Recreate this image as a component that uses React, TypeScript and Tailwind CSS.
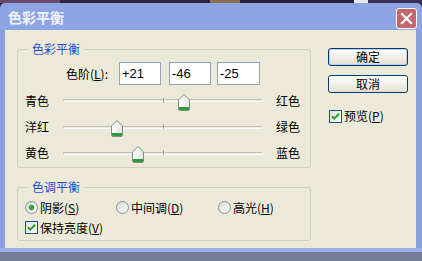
import React from "react";

const FONT = "font-['Noto_Sans_CJK_SC','Noto_Sans',sans-serif]";

function Thumb() {
  return (
    <svg width="12" height="17" viewBox="0 0 12 17">
      <defs>
        <linearGradient id="tg" x1="0" y1="0" x2="1" y2="0">
          <stop offset="0" stopColor="#ffffff" />
          <stop offset="1" stopColor="#e1e7e1" />
        </linearGradient>
      </defs>
      <path
        d="M0.5 5.8 L6 0.5 L11.5 5.8 L11.5 15 Q11.5 16.5 10 16.5 L2 16.5 Q0.5 16.5 0.5 15 Z"
        fill="url(#tg)"
        stroke="#7d8f86"
      />
      <path d="M1 13 H11 V15 Q11 16 10 16 H2 Q1 16 1 15 Z" fill="#2f9a3a" />
    </svg>
  );
}

function Radio({ checked }: { checked?: boolean }) {
  return (
    <svg width="13" height="13" viewBox="0 0 13 13">
      <defs>
        <linearGradient id="rg" x1="0" y1="0" x2="1" y2="1">
          <stop offset="0" stopColor="#d8d8d0" />
          <stop offset="1" stopColor="#ffffff" />
        </linearGradient>
      </defs>
      <circle cx="6.5" cy="6.5" r="6" fill="url(#rg)" stroke="#7b93ae" />
      {checked && <circle cx="6.5" cy="6.5" r="2.7" fill="#3aa53a" />}
    </svg>
  );
}

function Check() {
  return (
    <svg width="13" height="13" viewBox="0 0 13 13">
      <defs>
        <linearGradient id="cg" x1="0" y1="0" x2="1" y2="1">
          <stop offset="0" stopColor="#dcdcd6" />
          <stop offset="1" stopColor="#ffffff" />
        </linearGradient>
      </defs>
      <rect x="0.5" y="0.5" width="12" height="12" fill="url(#cg)" stroke="#1c5180" />
      <path d="M3 6.2 L5.3 8.6 L10 3.8" fill="none" stroke="#21a121" strokeWidth="2" />
    </svg>
  );
}

function SliderRow({
  left,
  right,
  value,
  h,
}: {
  left: string;
  right: string;
  value: number;
  h: string;
}) {
  return (
    <div className={`flex items-center pl-[7px] ${h}`}>
      <span className="w-[38px] text-[12px] leading-[16px]">{left}</span>
      <div className="relative w-[200px] h-full flex items-center">
        <div className="w-full h-[3px] rounded-[2px] border border-[#c2bfb2] border-b-white border-r-white bg-[#eceadf]" />
        <div className="absolute left-[100px] top-1/2 -mt-[3px] h-[5px] w-px bg-[#a3a095]" />
        <div className="absolute top-1/2 -mt-[7px] flex" style={{ left: value + 100 - 6 }}>
          <Thumb />
        </div>
      </div>
      <span className="ml-[13px] text-[12px] leading-[16px]">{right}</span>
    </div>
  );
}

function Group({
  title,
  className,
  children,
}: {
  title: string;
  className: string;
  children: React.ReactNode;
}) {
  return (
    <div className={`relative border border-[#d0d0bf] rounded-[3px] ${className}`}>
      <span className="absolute left-[10px] -top-[9px] px-[4px] bg-[#ece9d8] text-[12px] leading-[16px] text-[#1e4fd0]">
        {title}
      </span>
      {children}
    </div>
  );
}

function NumBox({ v, w }: { v: string; w: string }) {
  return (
    <div
      className={`${w} h-[23px] bg-white border border-[#8ea4c0] flex items-center pl-[2px] font-['Liberation_Sans',sans-serif] text-[13px] leading-[16px]`}
    >
      {v}
    </div>
  );
}

export default function App() {
  return (
    <div className={`w-[422px] h-[261px] flex flex-col overflow-hidden bg-[#2c2340] text-black ${FONT}`}>
      {/* background strip above the window */}
      <div className="h-[3px] flex">
        <div className="w-[60px] bg-[#6a4a6e]" />
        <div className="w-[150px] bg-[#2e2444]" />
        <div className="w-[30px] bg-[#8a6e52]" />
        <div className="w-[114px] bg-[#2a2040]" />
        <div className="w-[14px] bg-[#e8e8ee]" />
        <div className="flex-1 bg-[#3a2e58]" />
      </div>

      {/* title bar */}
      <div className="h-[27px] flex items-center bg-[#8da5e3] rounded-t-[5px]">
        <span className="ml-[8px] text-[14px] font-bold leading-[18px] text-[#f2f5fd]">色彩平衡</span>
        <div className="ml-auto mr-[5px] mt-[5px] self-start w-[21px] h-[21px] rounded-[3px] border border-white bg-[#c4676d] flex items-center justify-center">
          <svg width="13" height="13" viewBox="0 0 13 13">
            <path d="M2 2 L11 11 M11 2 L2 11" stroke="white" strokeWidth="2.2" strokeLinecap="square" />
          </svg>
        </div>
      </div>

      {/* body with side borders */}
      <div className="h-[218px] flex">
        <div className="w-[5px] bg-[#8aa0dd]" />
        <div className="flex-1 bg-[#ece9d8] flex pl-[12px]">
          {/* left column */}
          <div className="w-[294px] pt-[19px] flex flex-col">
            <Group title="色彩平衡" className="h-[119px]">
              <div className="pt-[12px] flex flex-col">
                <div className="h-[23px] flex items-center pl-[48px]">
                  <span className="w-[53px] text-[12px] leading-[16px]">
                    色阶(<span className="underline">L</span>):
                  </span>
                  <NumBox v="+21" w="w-[42px]" />
                  <div className="ml-[8px]">
                    <NumBox v="-46" w="w-[42px]" />
                  </div>
                  <div className="ml-[6px]">
                    <NumBox v="-25" w="w-[43px]" />
                  </div>
                </div>
                <div className="mt-[2px] flex flex-col">
                  <SliderRow left="青色" right="红色" value={21} h="h-[27px]" />
                  <SliderRow left="洋红" right="绿色" value={-46} h="h-[26px]" />
                  <SliderRow left="黄色" right="蓝色" value={-25} h="h-[26px]" />
                </div>
              </div>
            </Group>

            <Group title="色调平衡" className="mt-[19px] h-[54px]">
              <div className="pt-[12px] pl-[7px] flex flex-col">
                <div className="h-[15px] flex items-center text-[12px] leading-[16px]">
                  <div className="w-[91px] flex items-center">
                    <Radio checked />
                    <span className="ml-[2px]">
                      阴影(<span className="underline">S</span>)
                    </span>
                  </div>
                  <div className="w-[102px] flex items-center">
                    <Radio />
                    <span className="ml-[2px]">
                      中间调(<span className="underline">D</span>)
                    </span>
                  </div>
                  <div className="flex items-center">
                    <Radio />
                    <span className="ml-[2px]">
                      高光(<span className="underline">H</span>)
                    </span>
                  </div>
                </div>
                <div className="mt-[5px] h-[15px] flex items-center text-[12px] leading-[16px]">
                  <Check />
                  <span className="ml-[2px]">
                    保持亮度(<span className="underline">V</span>)
                  </span>
                </div>
              </div>
            </Group>
          </div>

          {/* right column */}
          <div className="ml-[17px] pt-[18px] flex flex-col">
            <button className="w-[80px] h-[18px] rounded-[3px] border border-[#003c74] bg-linear-to-b from-white to-[#e3e0d3] shadow-[inset_0_0_0_1px_#b9cdf5] text-[12px] leading-[14px] flex items-center justify-center">
              确定
            </button>
            <button className="mt-[9px] w-[80px] h-[18px] rounded-[3px] border border-[#003c74] bg-linear-to-b from-white to-[#e3e0d3] text-[12px] leading-[14px] flex items-center justify-center">
              取消
            </button>
            <div className="mt-[15px] ml-[1px] flex items-center text-[12px] leading-[16px]">
              <Check />
              <span className="ml-[2px]">
                预览(<span className="underline">P</span>)
              </span>
            </div>
          </div>
        </div>
        <div className="w-[6px] bg-[#8aa0dd]" />
      </div>

      {/* bottom border */}
      <div className="h-[4px] bg-[#9eaee8]" />
      <div className="h-[9px] bg-[#777c99]" />
    </div>
  );
}
